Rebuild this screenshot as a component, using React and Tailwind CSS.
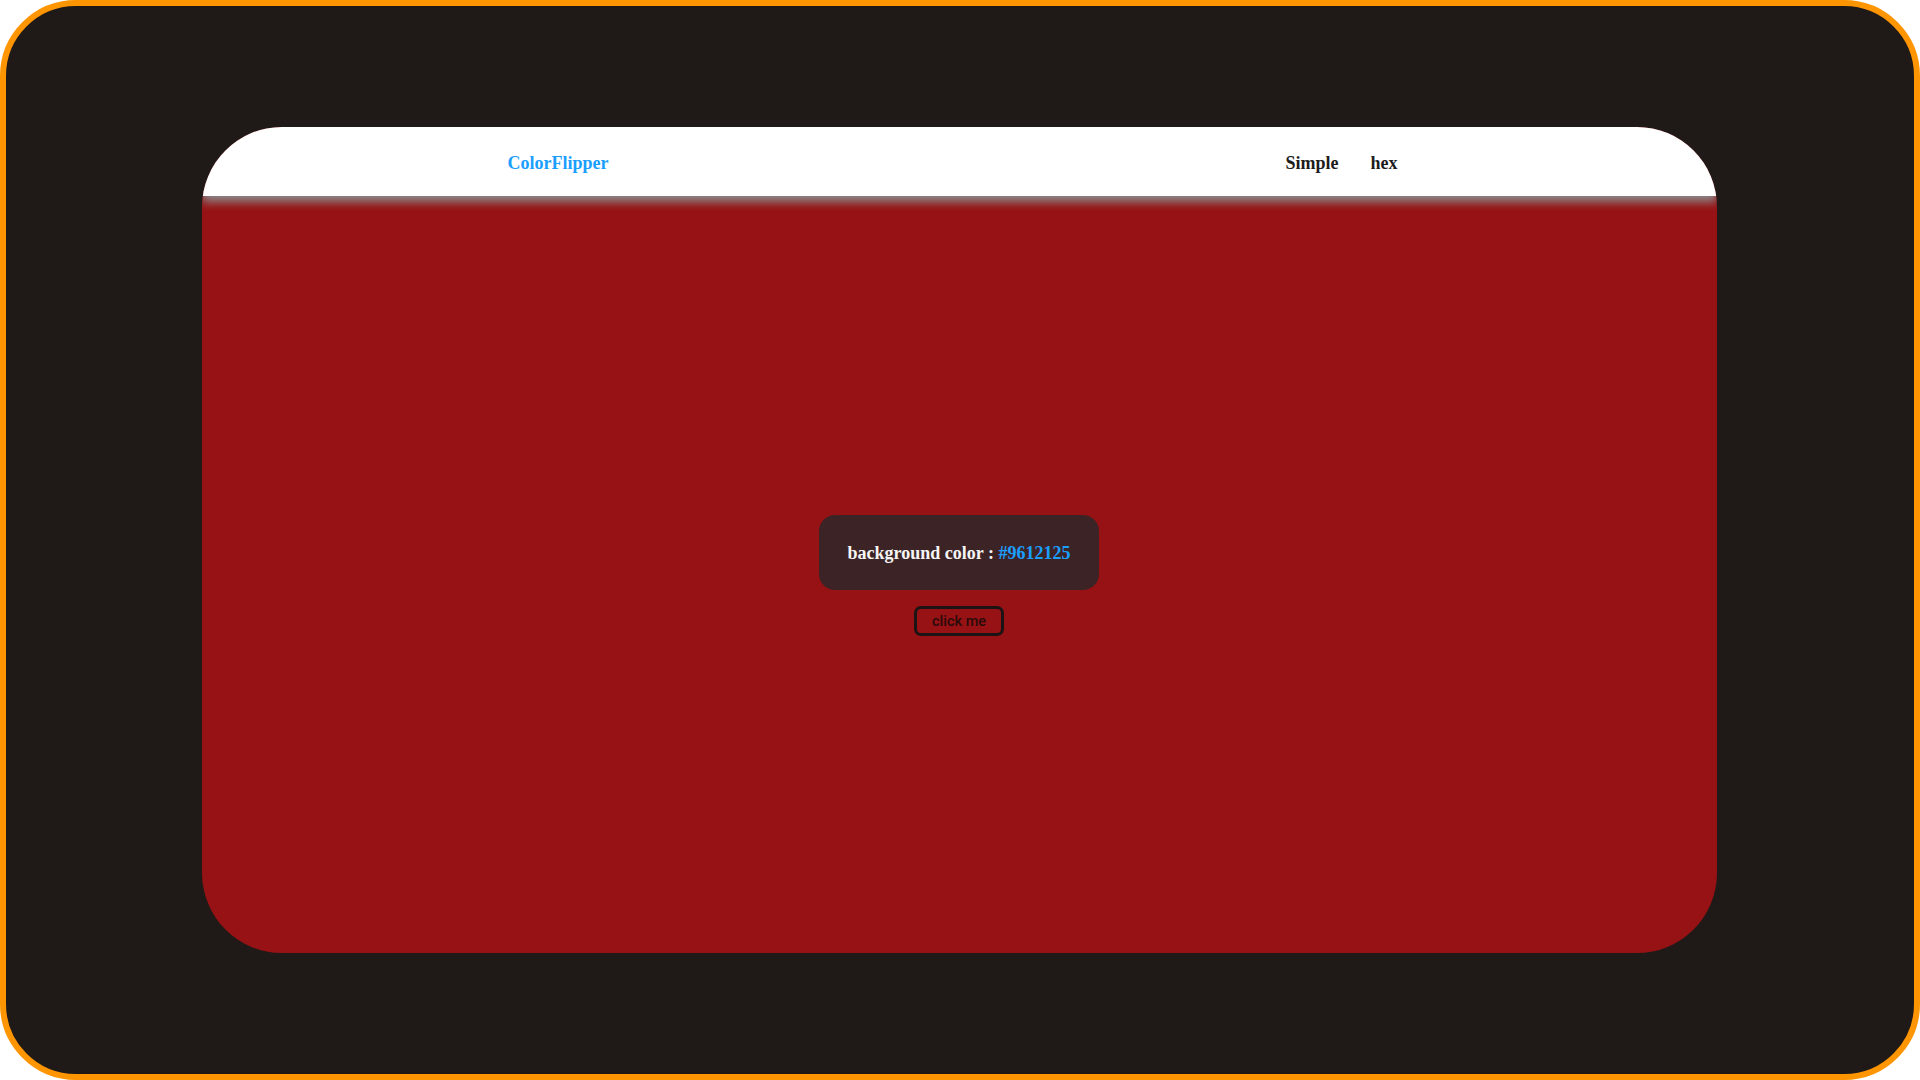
export default function App() {
  return (
    <div className="w-[1920px] h-[1080px] bg-white">
      <div className="w-full h-full bg-[#1f1a18] border-[6px] border-[#ff9500] rounded-[76px] flex items-center justify-center">
        <div className="w-[1515px] h-[826px] -translate-x-[1px] rounded-[80px] overflow-hidden bg-[#961214] flex flex-col">
          <header className="relative z-10 h-[69px] shrink-0 bg-white flex items-center justify-between pl-[306px] pr-[319px] pt-[3px] shadow-[0_6px_9px_#8a8a8a] font-['Liberation_Serif',serif] font-bold text-[18px]">
            <span className="text-[#1a9fff]">ColorFlipper</span>
            <nav className="flex gap-[32px] text-[#1c1c1c]">
              <span>Simple</span>
              <span>hex</span>
            </nav>
          </header>
          <main className="flex-1 flex flex-col items-center justify-center gap-[16px] pt-[2px]">
            <div className="w-[280px] h-[75px] rounded-[16px] bg-[#3c2426] flex items-center justify-center pt-[2px] font-['Liberation_Serif',serif] font-bold text-[18px] text-[#f5f5f5]">
              <span>
                background color : <span className="text-[#1a9fff]">#9612125</span>
              </span>
            </div>
            <button className="w-[90px] h-[30px] rounded-[7px] border-[3px] border-[#1c1414] bg-transparent flex items-center justify-center pt-[1px] font-['Roboto',Arial,sans-serif] text-[14.5px] font-medium text-[#2a0a0a]">
              click me
            </button>
          </main>
        </div>
      </div>
    </div>
  );
}
